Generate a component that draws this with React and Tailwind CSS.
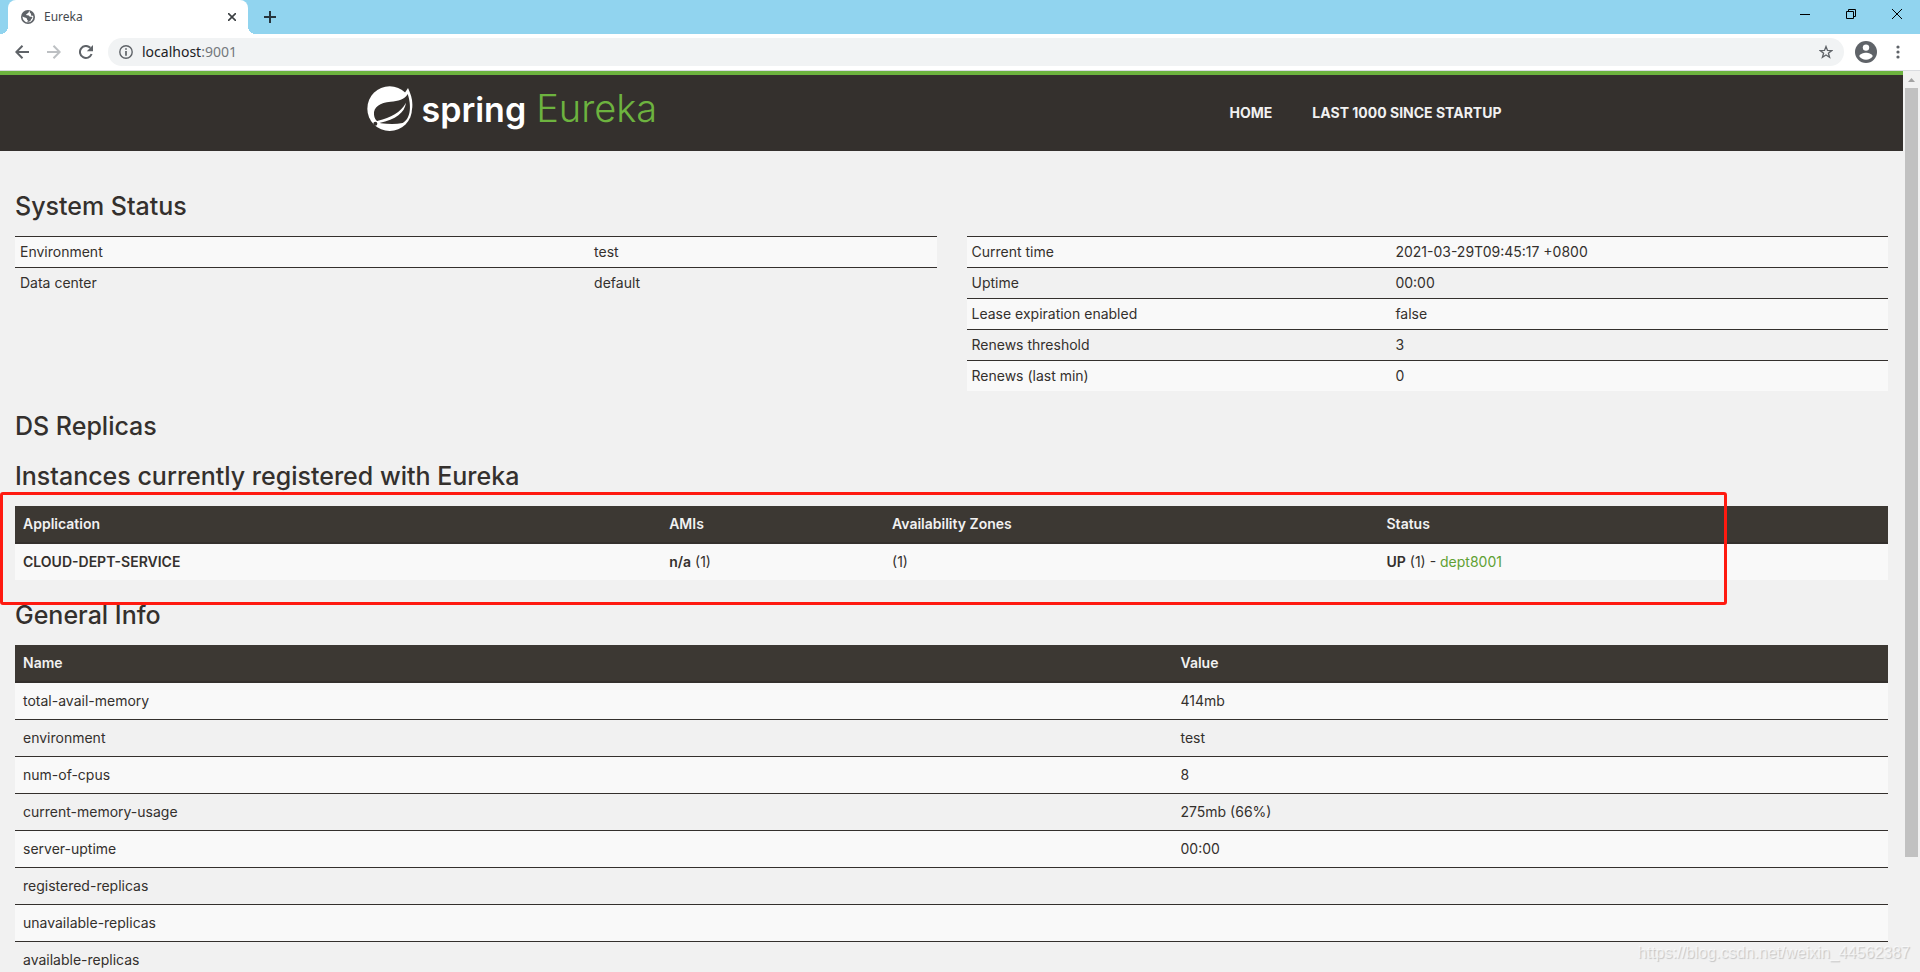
import { clsx } from "clsx";

const summary = [
  ["Environment", "test"],
  ["Data center", "default"],
];

const runtime = [
  ["Current time", "2021-03-29T09:45:17 +0800"],
  ["Uptime", "00:00"],
  ["Lease expiration enabled", "false"],
  ["Renews threshold", "3"],
  ["Renews (last min)", "0"],
];

const general = [
  ["total-avail-memory", "414mb"],
  ["environment", "test"],
  ["num-of-cpus", "8"],
  ["current-memory-usage", "275mb (66%)"],
  ["server-uptime", "00:00"],
  ["registered-replicas", ""],
  ["unavailable-replicas", ""],
  ["available-replicas", ""],
];

function TabStrip() {
  return (
    <div className="flex h-[34px] shrink-0 items-end bg-[#91d4ef]">
      <span className="size-2 bg-[radial-gradient(circle_at_0_0,#91d4ef_8px,white_8px)]" />
      <div className="flex h-full w-60 items-center gap-2 rounded-t-lg bg-white pr-2 pl-3 text-[#45494d]">
        <svg className="size-4" viewBox="0 0 16 16" aria-hidden="true">
          <circle cx="8" cy="8" r="7" fill="#5f6368" />
          <path
            fill="#fff"
            d="M8.800 2.300c.3.700 0 1.200-.6 1.500-.7.4-.8.900-1.500 1.300-.7.300-.7 1 .1 1.200 1 .2 1.900 0 2.300.7.300.6 1 .8 1.700.7.700 0 1.300.1 1.600.7-.1.900-.8 1-1.200 1.700-.4.800-.4 1.700-1.300 2.200-.7.500-1.700.9-2.800.8.100-.5.900-.7.8-1.400-.1-.6-.9-.7-.9-1.500 0-.9-.5-1.300-1.300-1.500C4.500 8.400 3.500 8 2.500 7.400c0 3 2.300 5.900 5.500 5.900 2.900 0 5.300-2.400 5.300-5.300 0-.6-.1-1-.3-1.500-.6.5-1.500.5-1.900-.2-.3-.6.2-1 0-1.600-.2-.7-1.200-.6-1.300-1.300 0-.4.2-.7.400-.8z"
          />
        </svg>
        <span className="flex-1 font-['Noto_Sans',sans-serif] text-xs">Eureka</span>
        <button type="button" aria-label="Close tab" className="grid size-4 place-items-center">
          <svg className="size-2" viewBox="0 0 8 8" stroke="#3c4043" strokeWidth="1.6" aria-hidden="true">
            <path d="M0 0l8 8M8 0L0 8" />
          </svg>
        </button>
      </div>
      <span className="size-2 bg-[radial-gradient(circle_at_100%_0,#91d4ef_8px,white_8px)]" />
      <button type="button" aria-label="New tab" className="grid h-full w-7 place-items-center">
        <svg className="size-3" viewBox="0 0 12 12" stroke="#27343c" strokeWidth="2" aria-hidden="true">
          <path d="M6 0v12M0 6h12" />
        </svg>
      </button>
      <div className="ml-auto flex self-start">
        <button type="button" aria-label="Minimize" className="grid h-7 w-[46px] place-items-center">
          <svg className="size-[10px]" viewBox="0 0 10 10" stroke="#000" aria-hidden="true">
            <path d="M0 5.500h10" />
          </svg>
        </button>
        <button type="button" aria-label="Restore" className="grid h-7 w-[46px] place-items-center">
          <svg className="size-[10px]" viewBox="0 0 10 10" stroke="#000" fill="none" aria-hidden="true">
            <path d="M.5 2.500h7v7h-7zM2.500 2.500v-2h7v7h-2" />
          </svg>
        </button>
        <button type="button" aria-label="Close" className="grid h-7 w-[46px] place-items-center">
          <svg className="size-[10px]" viewBox="0 0 10 10" stroke="#000" aria-hidden="true">
            <path d="M0 0l10 10M10 0L0 10" />
          </svg>
        </button>
      </div>
    </div>
  );
}

function Toolbar() {
  return (
    <div className="flex h-[37px] shrink-0 items-center border-b border-[#dadce0] bg-white pr-[15px] pl-[6px]">
      <button type="button" aria-label="Back" className="grid size-8 place-items-center">
        <svg className="size-[14px]" viewBox="0 0 14 14" fill="none" stroke="#5f6368" strokeWidth="2" aria-hidden="true">
          <path d="M14 7H1.500M7.500.7L1.300 7l6.200 6.300" />
        </svg>
      </button>
      <button type="button" aria-label="Forward" className="grid size-8 place-items-center">
        <svg className="size-[14px]" viewBox="0 0 14 14" fill="none" stroke="#bdc0c3" strokeWidth="2" aria-hidden="true">
          <path d="M0 7h12.500M6.500.7L12.700 7l-6.200 6.300" />
        </svg>
      </button>
      <button type="button" aria-label="Reload" className="grid size-8 place-items-center">
        <svg className="size-[14px]" viewBox="0 0 14 14" fill="none" aria-hidden="true">
          <path d="M12.600 9A6 6 0 1 1 11.300 2.800" stroke="#5f6368" strokeWidth="2" />
          <path d="M14 0v6.200H7.800z" fill="#5f6368" />
        </svg>
      </button>
      <div className="ml-[6px] flex h-7 flex-1 items-center gap-[9px] rounded-full bg-[#f1f3f4] px-[11px]">
        <svg className="size-[14px]" viewBox="0 0 14 14" aria-hidden="true">
          <circle cx="7" cy="7" r="6.200" fill="none" stroke="#5f6368" strokeWidth="1.400" />
          <path d="M7 3.200v1.600M7 6v4.800" stroke="#5f6368" strokeWidth="1.700" />
        </svg>
        <a href="#address" className="flex-1 font-['Noto_Sans',sans-serif] text-sm text-[#202124]">
          localhost<span className="text-[#74787c]">:9001</span>
        </a>
        <button type="button" aria-label="Bookmark this page">
          <svg className="size-[14px]" viewBox="0 0 14 14" fill="none" stroke="#5f6368" strokeWidth="1.300" aria-hidden="true">
            <path d="M7 1.500l1.500 3.900 4.200.2-3.300 2.600 1.200 4.100L7 10l-3.600 2.300 1.200-4.100-3.300-2.600 4.200-.2z" />
          </svg>
        </button>
      </div>
      <button type="button" aria-label="Profile" className="ml-[11px]">
        <svg className="size-[22px]" viewBox="0 0 22 22" aria-hidden="true">
          <circle cx="11" cy="11" r="11" fill="#5f6368" />
          <circle cx="11" cy="6.600" r="3.200" fill="#fff" />
          <path d="M4.300 15.300c0-2.300 4.400-3.600 6.700-3.600s6.700 1.300 6.700 3.600c-1.400 2.100-3.900 3.400-6.700 3.400s-5.300-1.300-6.700-3.400z" fill="#fff" />
        </svg>
      </button>
      <button type="button" aria-label="Menu" className="ml-[14px] grid h-7 w-[14px] place-items-center">
        <svg className="h-[14px] w-1" viewBox="0 0 4 14" fill="#5f6368" aria-hidden="true">
          <circle cx="2" cy="2" r="1.600" />
          <circle cx="2" cy="7" r="1.600" />
          <circle cx="2" cy="12" r="1.600" />
        </svg>
      </button>
    </div>
  );
}

function SpringLeaf() {
  return (
    <svg className="size-[46px]" viewBox="21 20 138 138" aria-hidden="true">
      <circle cx="89" cy="88" r="67" fill="#fff" />
      <path d="M126 54L144 26C153 46 160 66 156 90L140 96z" fill="#fff" />
      <path
        d="M143 44C134 61 114 66 92 67C60 69 40 83 42 106C43 116 47 122 52 126L62 132C85 134 108 135 128 131C154 117 154 76 143 44z"
        fill="#34302d"
      />
      <path d="M46 129L54 124C92 114 122 100 138 70C134 100 108 120 58 131z" fill="#fff" />
      <circle cx="46" cy="133" r="6" fill="#34302d" />
    </svg>
  );
}

function SiteHeader() {
  return (
    <header className="border-t-4 border-[#6db33f] bg-[#34302d]">
      <div className="mx-auto flex h-[76px] max-w-[1170px] items-center justify-between pr-[15px]">
        <a href="#spring" className="flex items-center gap-[9px] pb-2 text-white">
          <SpringLeaf />
          <span className="flex items-baseline gap-[10px] leading-10">
            <span className="text-[34px] font-semibold">spring</span>
            <span className="text-[38px] font-light text-[#6db33f]">Eureka</span>
          </span>
        </a>
        <nav className="flex text-sm font-bold text-[#f1f1f1]">
          <a href="#home" className="px-5">HOME</a>
          <a href="#lastn" className="px-5">LAST 1000 SINCE STARTUP</a>
        </nav>
      </div>
    </header>
  );
}

function Heading({ children, className }) {
  return <h1 className={clsx("px-[15px] text-[25px] leading-7 font-medium", className)}>{children}</h1>;
}

function CondensedTable({ rows, labelWidth }) {
  return (
    <table className="w-full table-fixed border-separate border-spacing-0 text-sm">
      <tbody>
        {rows.map(([name, value]) => (
          <tr key={name} className="odd:bg-[#f9f9f9]">
            <td className={clsx("border-t border-[#34302d] p-[5px]", labelWidth)}>{name}</td>
            <td className="border-t border-[#34302d] p-[5px]">{value}</td>
          </tr>
        ))}
      </tbody>
    </table>
  );
}

const headCell = "border-b-2 border-[#34302d] p-2 text-left font-semibold";

export default function App() {
  return (
    <div className="relative flex h-screen flex-col overflow-hidden bg-[#f1f1f1] font-[Inter,sans-serif] text-[#34302d]">
      <TabStrip />
      <Toolbar />
      <div className="flex min-h-0 flex-1">
        <div className="min-w-0 flex-1 overflow-hidden">
          <SiteHeader />
          <main>
            <Heading className="mt-[41px]">System Status</Heading>
            <div className="mt-4 grid grid-cols-2 items-start">
              <div className="px-[15px]">
                <CondensedTable rows={summary} labelWidth="w-[62.3%]" />
              </div>
              <div className="px-[15px]">
                <CondensedTable rows={runtime} labelWidth="w-[46%]" />
              </div>
            </div>

            <Heading className="mt-[21px]">DS Replicas</Heading>
            <Heading className="mt-[22px]">Instances currently registered with Eureka</Heading>
            <div className="relative mt-4 px-[15px]">
              <table className="w-full table-fixed border-separate border-spacing-0 text-sm">
                <thead className="bg-[#3c3833] text-[#f1f1f1]">
                  <tr>
                    <th className={clsx(headCell, "w-[34.5%]")}>Application</th>
                    <th className={clsx(headCell, "w-[11.9%]")}>AMIs</th>
                    <th className={clsx(headCell, "w-[26.4%]")}>Availability Zones</th>
                    <th className={headCell}>Status</th>
                  </tr>
                </thead>
                <tbody>
                  <tr className="bg-[#f9f9f9]">
                    <td className="p-2 font-semibold">CLOUD-DEPT-SERVICE</td>
                    <td className="p-2"><b className="font-semibold">n/a</b> (1)</td>
                    <td className="p-2">(1)</td>
                    <td className="p-2">
                      <b className="font-semibold">UP</b> (1) - <a href="#dept8001" className="text-[#5fa134]">dept8001</a>
                    </td>
                  </tr>
                </tbody>
              </table>
              <div className="pointer-events-none absolute -top-[14px] -bottom-[25px] left-0 w-[1727px] rounded-[3px] border-3 border-[#ff1a10]" />
            </div>

            <Heading className="mt-[21px]">General Info</Heading>
            <div className="mt-4 px-[15px]">
              <table className="w-full table-fixed border-separate border-spacing-0 text-sm">
                <thead className="bg-[#3c3833] text-[#f1f1f1]">
                  <tr>
                    <th className={clsx(headCell, "w-[61.8%]")}>Name</th>
                    <th className={headCell}>Value</th>
                  </tr>
                </thead>
                <tbody>
                  {general.map(([name, value], i) => (
                    <tr key={name} className="odd:bg-[#f9f9f9]">
                      <td className={clsx("p-2", i > 0 && "border-t border-[#34302d]")}>{name}</td>
                      <td className={clsx("p-2", i > 0 && "border-t border-[#34302d]")}>{value}</td>
                    </tr>
                  ))}
                </tbody>
              </table>
            </div>
          </main>
        </div>
        <div className="flex w-[17px] shrink-0 flex-col items-center bg-[#f1f1f1]">
          <div className="grid h-[17px] place-items-center">
            <svg className="h-1 w-[7px]" viewBox="0 0 7 4" fill="#a3a3a3" aria-hidden="true">
              <path d="M3.500 0L7 4H0z" />
            </svg>
          </div>
          <div className="min-h-0 w-full flex-1 px-[2px]">
            <div className="h-[87%] bg-[#c1c1c1]" />
          </div>
        </div>
      </div>
      <div className="pointer-events-none absolute right-[10px] bottom-[7px] font-['Liberation_Sans',sans-serif] text-base text-white/60 [text-shadow:1px_1px_1px_#00000030]">
        https://blog.csdn.net/weixin_44562387
      </div>
    </div>
  );
}
